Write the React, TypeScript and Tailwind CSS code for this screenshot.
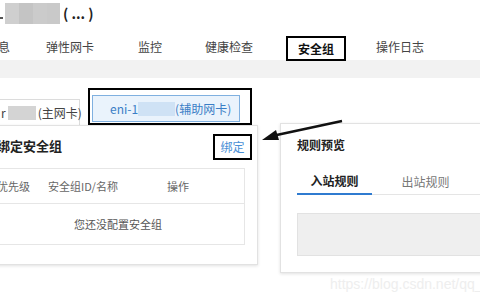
import React from "react";

export default function App() {
  const font = { fontFamily: '"Noto Sans CJK SC", "Noto Sans", sans-serif' };
  return (
    <div className="relative w-[480px] h-[300px] overflow-hidden bg-white text-[#333]" style={font}>
      {/* title row */}
      <div className="h-[34px] flex items-start pt-[3px]">
        <div className="w-[3px] h-[2px] bg-[#555] mt-[14px] mr-[2px]" />
        <div className="w-[55px] h-[21px] bg-[#c9c9c9] flex">
          <div className="w-[14px] h-full bg-[#cfcfcf]" />
          <div className="w-[14px] h-full bg-[#c4c4c4]" />
          <div className="w-[14px] h-full bg-[#cbcbcb]" />
        </div>
        <div className="ml-[3px] text-[14px] leading-[21px] font-bold text-[#222]">( ... )</div>
      </div>
      {/* tabs */}
      <div className="h-[26px] flex ml-[-54px] text-[12px] text-[#444] whitespace-nowrap">
        <div className="w-[80px] shrink-0 text-center leading-[26px]">基本信息</div>
        <div className="w-[88px] shrink-0 text-center leading-[26px]">弹性网卡</div>
        <div className="w-[72px] shrink-0 text-center leading-[26px]">监控</div>
        <div className="w-[86px] shrink-0 text-center leading-[26px]">健康检查</div>
        <div className="w-[88px] shrink-0 flex justify-center">
          <div className="relative z-10 mt-[2px] w-[60px] h-[25px] border-2 border-black bg-white flex items-center justify-center font-bold text-[#111]">
            安全组
          </div>
        </div>
        <div className="w-[80px] shrink-0 text-center leading-[26px]">操作日志</div>
      </div>
      {/* grey band */}
      <div className="h-[18px] bg-[#f2f2f2]" />
      {/* NIC tabs */}
      <div className="mt-[10px] h-[37px] flex items-end ml-[-10px] text-[12px] whitespace-nowrap">
        <div className="w-[90px] shrink-0 h-[26px] border border-[#dcdcdc] border-b-0 flex items-center pl-[10px] text-[#444]">
          <span>r</span>
          <span className="ml-[2px] w-[28px] h-[14px] bg-[#d4d4d4] shrink-0" />
          <span className="ml-[2px]">(主网卡)</span>
        </div>
        <div className="ml-[8px] shrink-0 w-[164px] h-[37px] border-2 border-black pl-[2px] pr-[10px] pt-[5px] flex">
          <div className="w-full h-[27px] bg-[#eaf3fc] border border-[#7fb0e0] flex items-center pl-[17px] text-[#3a7ec6]">
            <span>eni-1</span>
            <span className="w-[37px] h-[14px] bg-[#cfe2f5] shrink-0" />
            <span>(辅助网卡)</span>
          </div>
        </div>
      </div>
      {/* panels */}
      <div className="flex items-start">
        <div className="ml-[-10px] shrink-0 w-[268px] h-[140px] border border-[#e2e2e2] shadow-[0_1px_3px_rgba(0,0,0,0.12)] bg-white">
          <div className="h-[26px] mt-[8px] flex items-center justify-between pl-[6px] pr-[5px]">
            <div className="text-[13px] font-bold text-[#222] leading-[18px] mb-[3px]">绑定安全组</div>
            <div className="w-[39px] h-[26px] border-2 border-black flex items-center justify-center text-[12px] text-[#4a8fd6]">
              绑定
            </div>
          </div>
          <div className="mt-[8px] mr-[12px] h-[77px] border border-[#e6e6e6] text-[11px] whitespace-nowrap">
            <div className="h-[35px] flex items-center border-b border-[#e6e6e6] text-[#666]">
              <div className="w-[56px] pl-[5px]">优先级</div>
              <div className="w-[119px]">安全组ID/名称</div>
              <div>操作</div>
            </div>
            <div className="h-[40px] flex items-center justify-center text-[#555]">您还没配置安全组</div>
          </div>
        </div>
        <div className="ml-[22px] shrink-0 mt-[-2px] w-[220px] h-[150px] border border-[#e2e2e2] shadow-[0_1px_3px_rgba(0,0,0,0.12)] bg-white pl-[16px]">
          <div className="pt-[14px] text-[12px] leading-[14px] font-bold text-[#222]">规则预览</div>
          <div className="mt-[17px] h-[26px] flex border-b border-[#e5e5e5] text-[12px]">
            <div className="w-[75px] h-[26px] border-b-2 border-[#2f7bd0] flex items-center justify-center font-bold text-[#222]">入站规则</div>
            <div className="ml-[16px] w-[75px] h-[26px] flex items-center justify-center text-[#777]">出站规则</div>
          </div>
          <div className="mt-[18px] h-[43px] bg-[#efefef] border border-[#e2e2e2]" />
        </div>
      </div>
      {/* annotation arrow */}
      <svg className="absolute left-0 top-0" width="480" height="300" viewBox="0 0 480 300">
        <path d="M342 121 L272 136" stroke="#111" strokeWidth="2.5" fill="none" />
        <path d="M262 140 L276 130 L279 140 Z" fill="#111" />
      </svg>
      {/* watermark */}
      <div className="absolute left-[330px] top-[274px] text-[14px] text-[#eeeeee] whitespace-nowrap" style={{ fontFamily: '"Liberation Sans", sans-serif' }}>
        https://blog.csdn.net/qq_
      </div>
    </div>
  );
}
